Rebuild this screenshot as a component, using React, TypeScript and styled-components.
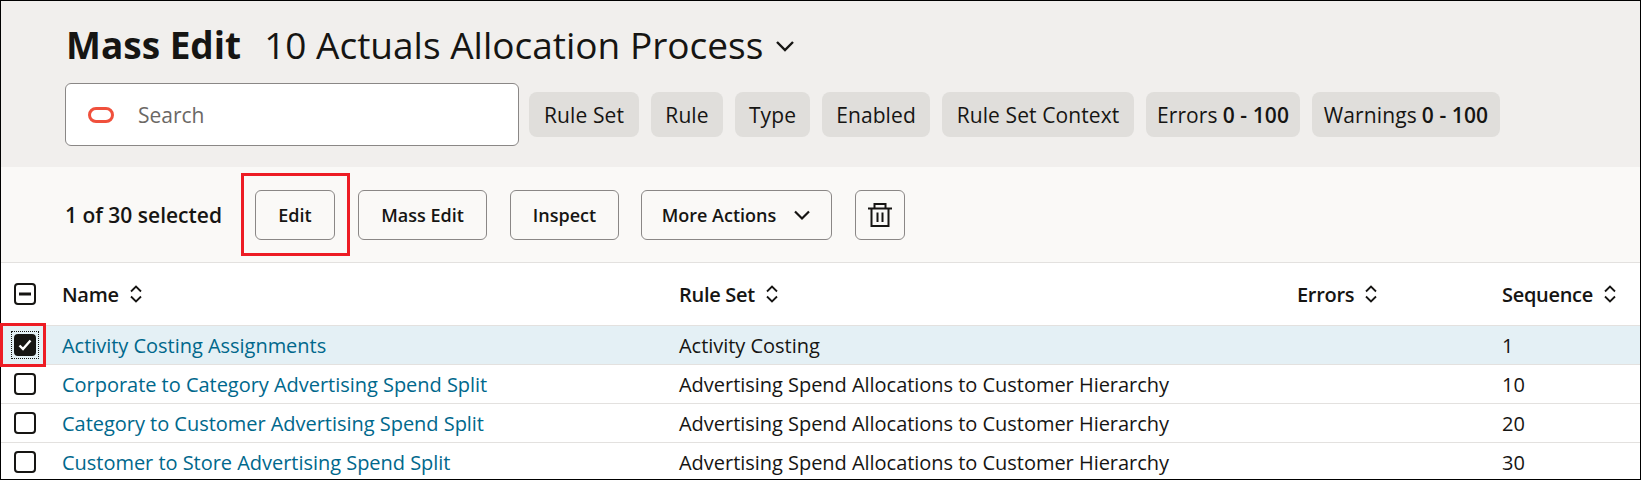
import React from 'react';
import styled, { createGlobalStyle } from 'styled-components';

const GlobalStyle = createGlobalStyle`
  html, body {
    margin: 0;
    background: #ffffff;
  }
  body {
    font-family: "Open Sans", "Noto Sans", sans-serif;
    color: #161513;
  }
`;

const Frame = styled.div`
  position: relative;
  box-sizing: border-box;
  width: 1641px;
  height: 480px;
  border: 1px solid #000;
`;

const Content = styled.div`
  height: 100%;
  overflow: hidden;
`;

const Header = styled.header`
  box-sizing: border-box;
  height: 166px;
  background: #f1efed;
  padding: 18px 0 0 64px;
`;

const TitleRow = styled.div`
  display: flex;
  align-items: center;
  height: 50px;
  padding-left: 1px;
`;

const Title = styled.h1`
  margin: 0 23px 0 0;
  font-size: 37px;
  font-weight: 700;
`;

const SubTitle = styled.span`
  font-size: 37px;
`;

const TitleCaret = styled.svg`
  width: 24px;
  height: 24px;
  margin: 4px 0 0 10px;
`;

const FilterRow = styled.div`
  display: flex;
  align-items: center;
  gap: 10px;
  margin-top: 14px;
`;

const SearchBox = styled.div`
  box-sizing: border-box;
  display: flex;
  align-items: center;
  width: 454px;
  height: 63px;
  padding-left: 22px;
  background: #fff;
  border: 1px solid #8a8786;
  border-radius: 6px;
  font-size: 21px;
  color: #6b6865;
`;

const OracleMark = styled.svg`
  width: 26px;
  height: 16px;
  margin-right: 24px;
`;

const ChipGroup = styled.div`
  display: flex;
  gap: 12px;
`;

const Chip = styled.div<{ $width: number }>`
  box-sizing: border-box;
  display: flex;
  align-items: center;
  justify-content: center;
  gap: 5px;
  height: 45px;
  width: ${props => props.$width}px;
  background: #e0dedb;
  border-radius: 8px;
  font-size: 21px;
  letter-spacing: 0.1px;
  white-space: nowrap;
`;

const ChipValue = styled.b`
  font-weight: 600;
`;

const Toolbar = styled.div`
  box-sizing: border-box;
  display: flex;
  align-items: center;
  height: 96px;
  padding-left: 64px;
  background: #faf9f7;
  border-bottom: 1px solid #e3e1df;
`;

const SelectedCount = styled.span`
  width: 190px;
  font-size: 21px;
  font-weight: 600;
`;

const ActionButton = styled.button<{ $width: number; $gap: number }>`
  box-sizing: border-box;
  display: flex;
  align-items: center;
  justify-content: center;
  gap: 17px;
  height: 50px;
  width: ${props => props.$width}px;
  margin-right: ${props => props.$gap}px;
  padding: 0;
  background: transparent;
  border: 1px solid #8a8786;
  border-radius: 6px;
  font-family: inherit;
  font-size: 18px;
  font-weight: 600;
  color: #161513;
`;

const Row = styled.div<{ $height: number; $selected?: boolean }>`
  box-sizing: border-box;
  display: grid;
  grid-template-columns: 61px 617px 618px 205px 1fr;
  align-items: center;
  height: ${props => props.$height}px;
  background: ${props => (props.$selected ? '#e4f0f5' : '#fff')};
  border-bottom: 1px solid #e3e1df;
  font-size: 20px;
  letter-spacing: -0.03px;
`;

const HeadRow = styled(Row)`
  font-weight: 600;
  letter-spacing: -0.3px;
`;

const HeadCell = styled.div`
  display: flex;
  align-items: center;
  gap: 10px;
`;

const CheckCell = styled.div`
  display: flex;
  padding-left: 13px;
`;

const CheckBox = styled.span<{ $checked?: boolean; $focused?: boolean }>`
  position: relative;
  box-sizing: border-box;
  display: flex;
  align-items: center;
  justify-content: center;
  width: 22px;
  height: 22px;
  border: 2px solid #161513;
  border-radius: 4px;
  background: ${props => (props.$checked ? '#161513' : '#fff')};

  ${props => props.$focused && `
    &::after {
      content: '';
      position: absolute;
      inset: -5px;
      border: 1px dotted #161513;
    }
  `}
`;

const NameLink = styled.a`
  color: #00688c;
`;

const Highlight = styled.div<{ $left: number; $top: number; $width: number; $height: number }>`
  position: absolute;
  box-sizing: border-box;
  left: ${props => props.$left}px;
  top: ${props => props.$top}px;
  width: ${props => props.$width}px;
  height: ${props => props.$height}px;
  border: 3px solid #ed1c24;
`;

const SortIcon = () => (
  <svg width="14" height="20" viewBox="0 0 14 20" fill="none" stroke="#161513" strokeWidth="1.8">
    <path d="M2 7.5 7 2.5l5 5M2 12.5l5 5 5-5" />
  </svg>
);

const rows = [
  { name: 'Activity Costing Assignments', ruleSet: 'Activity Costing', seq: 1 },
  { name: 'Corporate to Category Advertising Spend Split', ruleSet: 'Advertising Spend Allocations to Customer Hierarchy', seq: 10 },
  { name: 'Category to Customer Advertising Spend Split', ruleSet: 'Advertising Spend Allocations to Customer Hierarchy', seq: 20 },
  { name: 'Customer to Store Advertising Spend Split', ruleSet: 'Advertising Spend Allocations to Customer Hierarchy', seq: 30 },
];

const App: React.FC = () => (
  <Frame>
    <GlobalStyle />
    <Content>
      <Header>
        <TitleRow>
          <Title>Mass Edit</Title>
          <SubTitle>10 Actuals Allocation Process</SubTitle>
          <TitleCaret viewBox="0 0 24 24" fill="none" stroke="#161513" strokeWidth="2.4">
            <path d="M4 8l8 8 8-8" />
          </TitleCaret>
        </TitleRow>
        <FilterRow>
          <SearchBox>
            <OracleMark viewBox="0 0 26 16" fill="none" stroke="#f0503c" strokeWidth="3">
              <rect x="1.5" y="1.5" width="23" height="13" rx="6.5" />
            </OracleMark>
            Search
          </SearchBox>
          <ChipGroup>
            <Chip $width={110}>Rule Set</Chip>
            <Chip $width={72}>Rule</Chip>
            <Chip $width={75}>Type</Chip>
            <Chip $width={108}>Enabled</Chip>
            <Chip $width={192}>Rule Set Context</Chip>
            <Chip $width={154}>Errors <ChipValue>0 - 100</ChipValue></Chip>
            <Chip $width={188}>Warnings <ChipValue>0 - 100</ChipValue></Chip>
          </ChipGroup>
        </FilterRow>
      </Header>
      <Toolbar>
        <SelectedCount>1 of 30 selected</SelectedCount>
        <ActionButton $width={80} $gap={23}>Edit</ActionButton>
        <ActionButton $width={129} $gap={23}>Mass Edit</ActionButton>
        <ActionButton $width={109} $gap={22}>Inspect</ActionButton>
        <ActionButton $width={191} $gap={23}>
          More Actions
          <svg width="18" height="18" viewBox="0 0 18 18" fill="none" stroke="#161513" strokeWidth="2.2">
            <path d="M2 5.5l7 7 7-7" />
          </svg>
        </ActionButton>
        <ActionButton $width={50} $gap={0} aria-label="Delete">
          <svg width="24" height="24" viewBox="0 0 24 24" fill="none" stroke="#161513" strokeWidth="2">
            <path d="M0 5.5h24M3.5 5.5V23h17V5.5M6.5 5.5V1h11v4.5M9.5 9.5v9.5M14.5 9.5v9.5" />
          </svg>
        </ActionButton>
      </Toolbar>
      <HeadRow $height={63}>
        <CheckCell>
          <CheckBox>
            <svg width="12" height="4" viewBox="0 0 12 4"><rect width="12" height="3" y="0.5" fill="#161513" /></svg>
          </CheckBox>
        </CheckCell>
        <HeadCell>Name <SortIcon /></HeadCell>
        <HeadCell>Rule Set <SortIcon /></HeadCell>
        <HeadCell>Errors <SortIcon /></HeadCell>
        <HeadCell>Sequence <SortIcon /></HeadCell>
      </HeadRow>
      {rows.map((row, index) => (
        <Row key={row.name} $height={39} $selected={index === 0}>
          <CheckCell>
            <CheckBox $checked={index === 0} $focused={index === 0}>
              {index === 0 && (
                <svg width="14" height="12" viewBox="0 0 14 12" fill="none" stroke="#fff" strokeWidth="2.4">
                  <path d="M1.5 6.5 5 10l7.5-8.5" />
                </svg>
              )}
            </CheckBox>
          </CheckCell>
          <NameLink>{row.name}</NameLink>
          <span>{row.ruleSet}</span>
          <span />
          <span>{row.seq}</span>
        </Row>
      ))}
    </Content>
    <Highlight $left={240} $top={172} $width={109} $height={83} />
    <Highlight $left={-1} $top={322} $width={46} $height={44} />
  </Frame>
);

export default App;
